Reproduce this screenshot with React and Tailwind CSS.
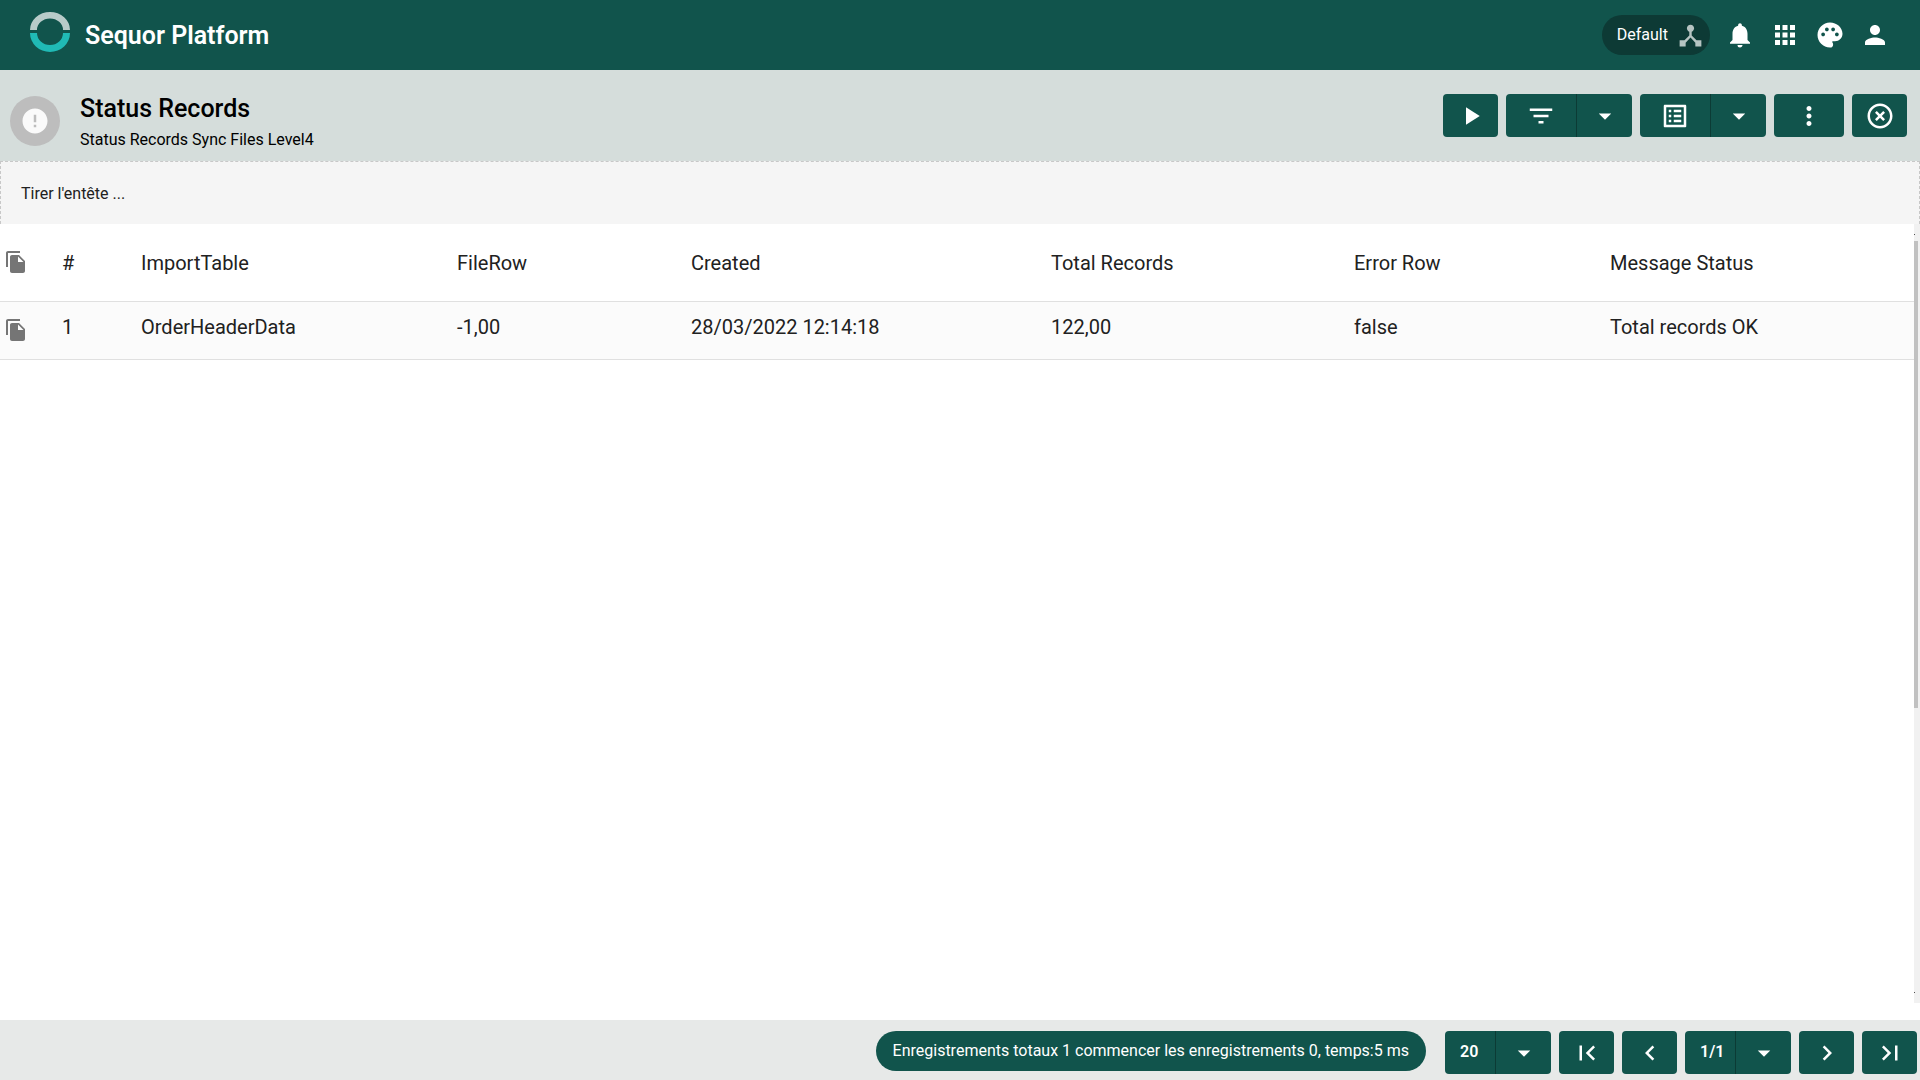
import React from "react";
import {
    MdApps,
    MdArrowDropDown,
    MdChevronLeft,
    MdChevronRight,
    MdDeviceHub,
    MdError,
    MdFilterList,
    MdFirstPage,
    MdHighlightOff,
    MdLastPage,
    MdListAlt,
    MdMoreVert,
    MdNotifications,
    MdPalette,
    MdPerson,
    MdPlayArrow,
} from "react-icons/md";

const columns = [
    { key: "importTable", label: "ImportTable", width: "w-[316px]" },
    { key: "fileRow", label: "FileRow", width: "w-[234px]" },
    { key: "created", label: "Created", width: "w-[360px]" },
    { key: "totalRecords", label: "Total Records", width: "w-[303px]" },
    { key: "errorRow", label: "Error Row", width: "w-[256px]" },
    { key: "messageStatus", label: "Message Status", width: "" },
];

const records = [
    {
        importTable: "OrderHeaderData",
        fileRow: "-1,00",
        created: "28/03/2022 12:14:18",
        totalRecords: "122,00",
        errorRow: "false",
        messageStatus: "Total records OK",
    },
];

const Logo = () => (
    <svg width="40" height="40" viewBox="0 0 40 40" aria-hidden="true">
        <path d="M0 18a20 18 0 0 1 40 0h-7a13 11.500 0 0 0-26 0z" fill="#b8cbc9" />
        <path d="M0 21a20 19 0 0 0 40 0h-7a13 12 0 0 1-26 0z" fill="#20bab5" />
    </svg>
);

const CopyIcon = () => (
    <svg width="24" height="24" viewBox="0 0 24 24" fill="#757575" aria-hidden="true">
        <path d="M16 1H4c-1.100 0-2 .9-2 2v14h2V3h12V1zm-1 4l6 6v10c0 1.100-.9 2-2 2H7.990C6.890 23 6 22.100 6 21l.010-14c0-1.100.890-2 1.990-2h7zm-1 7h5.500L14 6.500V12z" />
    </svg>
);

const CopyButton = ({ label }) => (
    <button type="button" aria-label={label} className="block ml-1">
        <CopyIcon />
    </button>
);

const HeaderButton = ({ label, icon: Icon }) => (
    <button type="button" aria-label={label} className="text-white">
        <Icon size={30} />
    </button>
);

const ToolButton = ({ label, icon: Icon, wide }) => (
    <button
        type="button"
        aria-label={label}
        className={`flex h-[43px] items-center justify-center rounded bg-[#11544c] text-white ${
            wide ? "w-[70px]" : "w-[55px]"
        }`}
    >
        <Icon size={30} />
    </button>
);

const SplitButton = ({ label, icon: Icon }) => (
    <div className="flex h-[43px] overflow-hidden rounded bg-[#11544c] text-white">
        <button
            type="button"
            aria-label={label}
            className="flex w-[71px] items-center justify-center border-r border-[#0c3b35]"
        >
            <Icon size={30} />
        </button>
        <button
            type="button"
            aria-label={`${label} options`}
            className="flex w-[55px] items-center justify-center"
        >
            <MdArrowDropDown size={30} />
        </button>
    </div>
);

const PagerSelect = ({ label, value, options }) => (
    <div className="relative h-[43px] rounded bg-[#11544c] text-white">
        <select
            aria-label={label}
            defaultValue={value}
            className="h-full w-[106px] appearance-none bg-transparent pl-[15px] pb-px text-base font-semibold"
        >
            {options.map((option) => (
                <option key={option}>{option}</option>
            ))}
        </select>
        <span className="pointer-events-none absolute inset-y-0 right-0 flex w-14 items-center justify-center border-l border-[#0c3b35]">
            <MdArrowDropDown size={30} />
        </span>
    </div>
);

const TopBar = () => (
    <header className="flex h-[70px] shrink-0 items-center justify-between bg-[#11544c] px-[30px]">
        <div className="flex items-center gap-[15px]">
            <div className="pb-1.5">
                <Logo />
            </div>
            <span className="pt-0.5 text-[25px] font-semibold text-white">Sequor Platform</span>
        </div>
        <div className="flex items-center gap-[15px]">
            <button
                type="button"
                className="flex h-10 items-center gap-2 rounded-full bg-[#0d3a35] pl-[15px] pr-[5px] text-base text-white"
            >
                Default
                <MdDeviceHub size={29} className="text-[#b6c4c2]" />
            </button>
            <HeaderButton label="Notifications" icon={MdNotifications} />
            <HeaderButton label="Applications" icon={MdApps} />
            <HeaderButton label="Theme" icon={MdPalette} />
            <HeaderButton label="Account" icon={MdPerson} />
        </div>
    </header>
);

const PageHeader = () => (
    <div className="flex h-[91px] shrink-0 items-start justify-between bg-[#d5dddb] pl-[10px] pr-[13px]">
        <div className="flex items-start gap-5 pt-[23px]">
            <div className="mt-[3px] flex size-[50px] items-center justify-center rounded-full bg-[#bdbdbd] text-[#fafafa]">
                <MdError size={30} />
            </div>
            <div className="text-black">
                <h1 className="text-[25px] leading-8 font-medium">Status Records</h1>
                <p className="text-base leading-[30px]">Status Records Sync Files Level4</p>
            </div>
        </div>
        <div className="flex gap-2 pt-6">
            <ToolButton label="Run" icon={MdPlayArrow} />
            <SplitButton label="Filter" icon={MdFilterList} />
            <SplitButton label="Layout" icon={MdListAlt} />
            <ToolButton label="More" icon={MdMoreVert} wide />
            <ToolButton label="Close" icon={MdHighlightOff} />
        </div>
    </div>
);

const RecordsTable = () => (
    <table className="w-full table-fixed border-collapse text-left text-xl text-[#212121]">
        <thead>
            <tr className="h-[77px] border-b border-[#e0e0e0]">
                <th className="w-[62px] font-normal">
                    <CopyButton label="Copy all rows" />
                </th>
                <th className="w-[79px] pt-0.5 font-normal">#</th>
                {columns.map((col) => (
                    <th key={col.key} className={`pt-0.5 font-normal ${col.width}`}>
                        {col.label}
                    </th>
                ))}
            </tr>
        </thead>
        <tbody>
            {records.map((record, i) => (
                <tr key={i} className="h-[58px] border-b border-[#e0e0e0] bg-[#fbfbfb]">
                    <td>
                        <CopyButton label={`Copy row ${i + 1}`} />
                    </td>
                    <td className="pb-1.5">{i + 1}</td>
                    {columns.map((col) => (
                        <td key={col.key} className="pb-1.5">
                            {record[col.key]}
                        </td>
                    ))}
                </tr>
            ))}
        </tbody>
    </table>
);

const ScrollTrack = () => (
    <div className="flex w-[6px] shrink-0 flex-col bg-[#f1f1f1]" aria-hidden="true">
        <div className="h-[17px] pt-[10px]">
            <div className="size-px bg-[#505050]" />
        </div>
        <div className="h-3/5 w-1 bg-[#c1c1c1]" />
        <div className="mt-auto mb-[10px] size-px bg-[#505050]" />
    </div>
);

const Footer = () => (
    <footer className="flex h-[60px] shrink-0 items-start justify-end gap-2 bg-[#e7e9e8] pt-[11px] pr-[3px] text-white">
        <div className="mr-[11px] flex h-10 items-center rounded-full bg-[#11544c] px-[17px] text-base">
            Enregistrements totaux 1 commencer les enregistrements 0, temps:5 ms
        </div>
        <PagerSelect label="Rows per page" value="20" options={["20", "50", "100"]} />
        <ToolButton label="First page" icon={MdFirstPage} />
        <ToolButton label="Previous page" icon={MdChevronLeft} />
        <PagerSelect label="Page" value="1/1" options={["1/1"]} />
        <ToolButton label="Next page" icon={MdChevronRight} />
        <ToolButton label="Last page" icon={MdLastPage} />
    </footer>
);

const App = () => {
    return (
        <div className="flex h-screen flex-col bg-white font-[Roboto,sans-serif]">
            <TopBar />
            <PageHeader />
            <div className="flex h-[63px] shrink-0 items-center border border-b-0 border-dashed border-[#c8c8c8] bg-[#f5f5f5] px-5 pt-px text-base text-[#212121]">
                Tirer l'entête ...
            </div>
            <main className="mb-[17px] flex min-h-0 grow">
                <div className="min-w-0 grow">
                    <RecordsTable />
                </div>
                <ScrollTrack />
            </main>
            <Footer />
        </div>
    );
};

export default App;
